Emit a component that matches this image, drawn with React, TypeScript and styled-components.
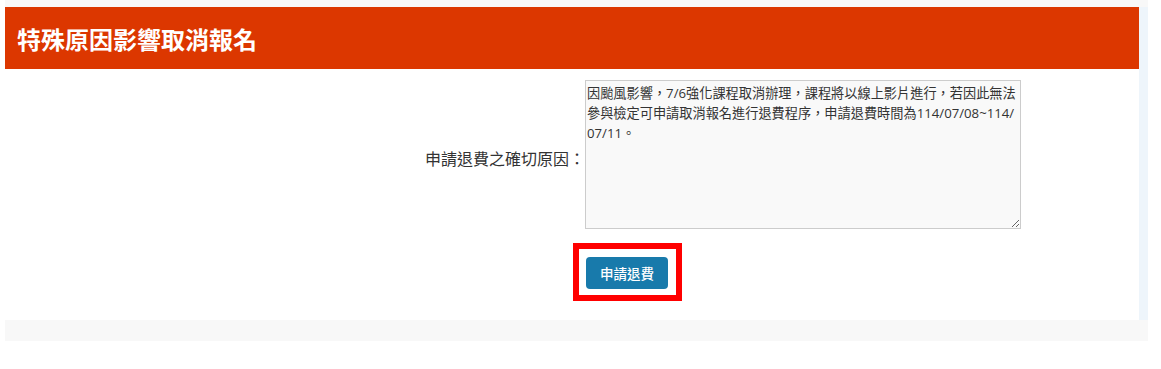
import React from 'react'
import styled, { createGlobalStyle } from 'styled-components'

const GlobalStyle = createGlobalStyle`
  html, body {
    margin: 0;
    padding: 0;
    background: #ffffff;
  }
  body {
    font-family: "Open Sans", "Noto Sans CJK TC", sans-serif;
    color: #333333;
  }
`

const Page = styled.div`
  margin-left: 5px;
  width: 1143px;
  padding: 7px 0 21px;
  background-color: #f8f8f8;
`

const Card = styled.div`
  display: flex;
  background-color: #eef5fb;
`

const Panel = styled.section`
  width: 1134px;
  background-color: #ffffff;
`

const Header = styled.h2`
  margin: 0;
  height: 62px;
  display: flex;
  align-items: center;
  padding-left: 12px;
  background-color: #dc3700;
  color: #ffffff;
  font-family: "Noto Sans CJK TC", sans-serif;
  font-size: 24px;
  font-weight: 700;
`

const Body = styled.form`
  padding: 11px 0 19px;
  display: flex;
  flex-direction: column;
  gap: 14px;
`

const FieldRow = styled.div`
  display: grid;
  grid-template-columns: 580px 436px;
  align-items: center;
`

const Label = styled.label`
  text-align: right;
  font-family: "Noto Sans CJK TC", sans-serif;
  font-size: 16px;
  color: #333333;
  padding-top: 6px;
`

const Reason = styled.textarea`
  box-sizing: border-box;
  width: 436px;
  height: 149px;
  margin: 0;
  padding: 2px 1px;
  border: 1px solid #cccccc;
  background-color: #f9f9f9;
  color: #333333;
  font-family: "Open Sans", "Noto Sans CJK TC", sans-serif;
  font-size: 13.2px;
  line-height: 20px;
  word-break: break-all;
  outline: none;
`

const ActionRow = styled.div`
  padding-left: 568px;
  display: flex;
`

const Highlight = styled.div`
  border: 6px solid #ff0000;
  padding: 8px 8px 6px 7px;
  display: flex;
`

const SubmitButton = styled.button`
  width: 82px;
  height: 32px;
  border: none;
  border-radius: 4px;
  background-color: #187aab;
  color: #ffffff;
  font-family: "Noto Sans CJK TC", sans-serif;
  font-size: 13.5px;
  font-weight: 500;
  cursor: pointer;
`

const reasonText =
  '因颱風影響，7/6強化課程取消辦理，課程將以線上影片進行，若因此無法參與檢定可申請取消報名進行退費程序，申請退費時間為114/07/08~114/07/11。'

export default function App() {
  return (
    <>
      <GlobalStyle />
      <Page>
        <Card>
          <Panel>
            <Header>特殊原因影響取消報名</Header>
            <Body onSubmit={e => e.preventDefault()}>
              <FieldRow>
                <Label htmlFor="reason">申請退費之確切原因：</Label>
                <Reason id="reason" defaultValue={reasonText} />
              </FieldRow>
              <ActionRow>
                <Highlight>
                  <SubmitButton type="submit">申請退費</SubmitButton>
                </Highlight>
              </ActionRow>
            </Body>
          </Panel>
        </Card>
      </Page>
    </>
  )
}
